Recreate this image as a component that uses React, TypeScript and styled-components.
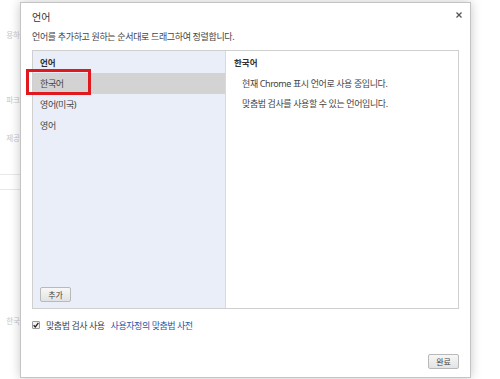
import styled, { createGlobalStyle } from "styled-components";

const GlobalStyle = createGlobalStyle`
  html, body {
    margin: 0;
    padding: 0;
    background: #ffffff;
    font-family: "Noto Sans", "Noto Sans CJK KR", sans-serif;
  }
`;

const Page = styled.div`
  position: relative;
  width: 500px;
  height: 379px;
  overflow: hidden;
  background: #ffffff;
`;

const Backdrop = styled.div`
  width: 20px;
  display: flex;
  flex-direction: column;
  padding-top: 30px;
`;

const BackText = styled.div<{ $top: number }>`
  margin-top: ${(p) => p.$top}px;
  display: flex;
  justify-content: flex-end;
  white-space: nowrap;
  font-size: 7.5px;
  line-height: 10px;
  color: #c8c8c8;
`;

const BackRule = styled.div<{ $top: number }>`
  margin-top: ${(p) => p.$top}px;
  height: 1px;
  background: #e8e8e8;
`;

const Dialog = styled.div`
  position: absolute;
  left: 20px;
  top: 2px;
  width: 451px;
  height: 376px;
  box-sizing: border-box;
  border: 1px solid #c4c4c4;
  background: #ffffff;
  box-shadow: 0 0 10px rgba(0, 0, 0, 0.22);
  padding: 8px 11px 8px 11px;
  display: flex;
  flex-direction: column;
  color: #333333;
`;

const Close = styled.button`
  position: absolute;
  top: 6px;
  right: 5px;
  width: 12px;
  height: 12px;
  padding: 0;
  border: 0;
  background: transparent;
  display: flex;
  align-items: center;
  justify-content: center;
`;

const Title = styled.h1`
  margin: 0;
  font-size: 10px;
  font-weight: 400;
  line-height: 12px;
  color: #333333;
`;

const Subtitle = styled.p`
  margin: 8px 0 0;
  font-size: 9px;
  line-height: 12px;
  letter-spacing: -0.35px;
  color: #444444;
`;

const Panel = styled.div`
  margin-top: 7px;
  height: 259px;
  box-sizing: border-box;
  border: 1px solid #cfcfcf;
  display: grid;
  grid-template-columns: 193px 1fr;
`;

const ListColumn = styled.div`
  background: #eaeef8;
  border-right: 1px solid #d6d9e0;
  display: flex;
  flex-direction: column;
`;

const ColumnHeader = styled.div`
  height: 22px;
  display: flex;
  align-items: center;
  padding-left: 7px;
  font-size: 8.5px;
  font-weight: 700;
  color: #303030;
`;

const LangRow = styled.div<{ $selected?: boolean }>`
  position: relative;
  height: 21px;
  display: flex;
  align-items: center;
  padding-left: 7px;
  font-size: 9px;
  letter-spacing: -0.4px;
  color: #444444;
  background: ${(p) => (p.$selected ? "#d3d3d3" : "transparent")};
`;

const Highlight = styled.span`
  position: absolute;
  left: -7px;
  top: -4px;
  width: 65px;
  height: 26px;
  box-sizing: border-box;
  border: 3px solid #e0191f;
  pointer-events: none;
`;

const ListFooter = styled.div`
  margin-top: auto;
  padding: 0 0 5px 7px;
`;

const SmallButton = styled.button`
  height: 15px;
  min-width: 31px;
  padding: 0 5px;
  box-sizing: border-box;
  border: 1px solid #b9b9b9;
  border-radius: 2px;
  background: linear-gradient(#f7f7f7, #e3e3e3);
  font-family: inherit;
  font-size: 8px;
  line-height: 13px;
  color: #444444;
`;

const DetailColumn = styled.div`
  display: flex;
  flex-direction: column;
  padding-left: 8px;
`;

const DetailHeader = styled(ColumnHeader)`
  padding-left: 0;
`;

const DetailLine = styled.div`
  height: 20px;
  display: flex;
  align-items: center;
  padding-left: 8px;
  font-size: 9px;
  letter-spacing: -0.4px;
  color: #444444;
`;

const CheckRow = styled.label`
  margin-top: 10px;
  height: 12px;
  display: flex;
  align-items: center;
  gap: 6px;
  font-size: 9px;
  letter-spacing: -0.45px;
  color: #444444;
`;

const CheckBox = styled.span`
  width: 8px;
  height: 8px;
  box-sizing: border-box;
  border: 1px solid #9a9a9a;
  border-radius: 1px;
  background: #f2f2f2;
  display: flex;
  align-items: center;
  justify-content: center;
`;

const Link = styled.a`
  color: #2a55a8;
  text-decoration: none;
`;

const Footer = styled.div`
  margin-top: auto;
  display: flex;
  justify-content: flex-end;
`;

export default function App() {
  return (
    <>
      <GlobalStyle />
      <Page>
        <Backdrop>
          <BackText $top={0}>용하</BackText>
          <BackText $top={55}>파크</BackText>
          <BackText $top={28}>제공</BackText>
          <BackRule $top={31} />
          <BackRule $top={14} />
          <BackText $top={126}>한국</BackText>
        </Backdrop>

        <Dialog>
          <Close aria-label="닫기">
            <svg width="6" height="6" viewBox="0 0 6 6">
              <path d="M0.5 0.5 L5.5 5.5 M5.5 0.5 L0.5 5.5" stroke="#555" strokeWidth="1.3" />
            </svg>
          </Close>
          <Title>언어</Title>
          <Subtitle>언어를 추가하고 원하는 순서대로 드래그하여 정렬합니다.</Subtitle>

          <Panel>
            <ListColumn>
              <ColumnHeader>언어</ColumnHeader>
              <LangRow $selected>
                한국어
                <Highlight />
              </LangRow>
              <LangRow>영어(미국)</LangRow>
              <LangRow>영어</LangRow>
              <ListFooter>
                <SmallButton>추가</SmallButton>
              </ListFooter>
            </ListColumn>
            <DetailColumn>
              <DetailHeader>한국어</DetailHeader>
              <DetailLine>현재 Chrome 표시 언어로 사용 중입니다.</DetailLine>
              <DetailLine>맞춤법 검사를 사용할 수 있는 언어입니다.</DetailLine>
            </DetailColumn>
          </Panel>

          <CheckRow>
            <CheckBox>
              <svg width="6" height="6" viewBox="0 0 6 6">
                <path d="M0.6 3.2 L2.3 4.9 L5.4 0.9" stroke="#222" strokeWidth="1.3" fill="none" />
              </svg>
            </CheckBox>
            <span>맞춤법 검사 사용</span>
            <Link href="#">사용자정의 맞춤법 사전</Link>
          </CheckRow>

          <Footer>
            <SmallButton>완료</SmallButton>
          </Footer>
        </Dialog>
      </Page>
    </>
  );
}
